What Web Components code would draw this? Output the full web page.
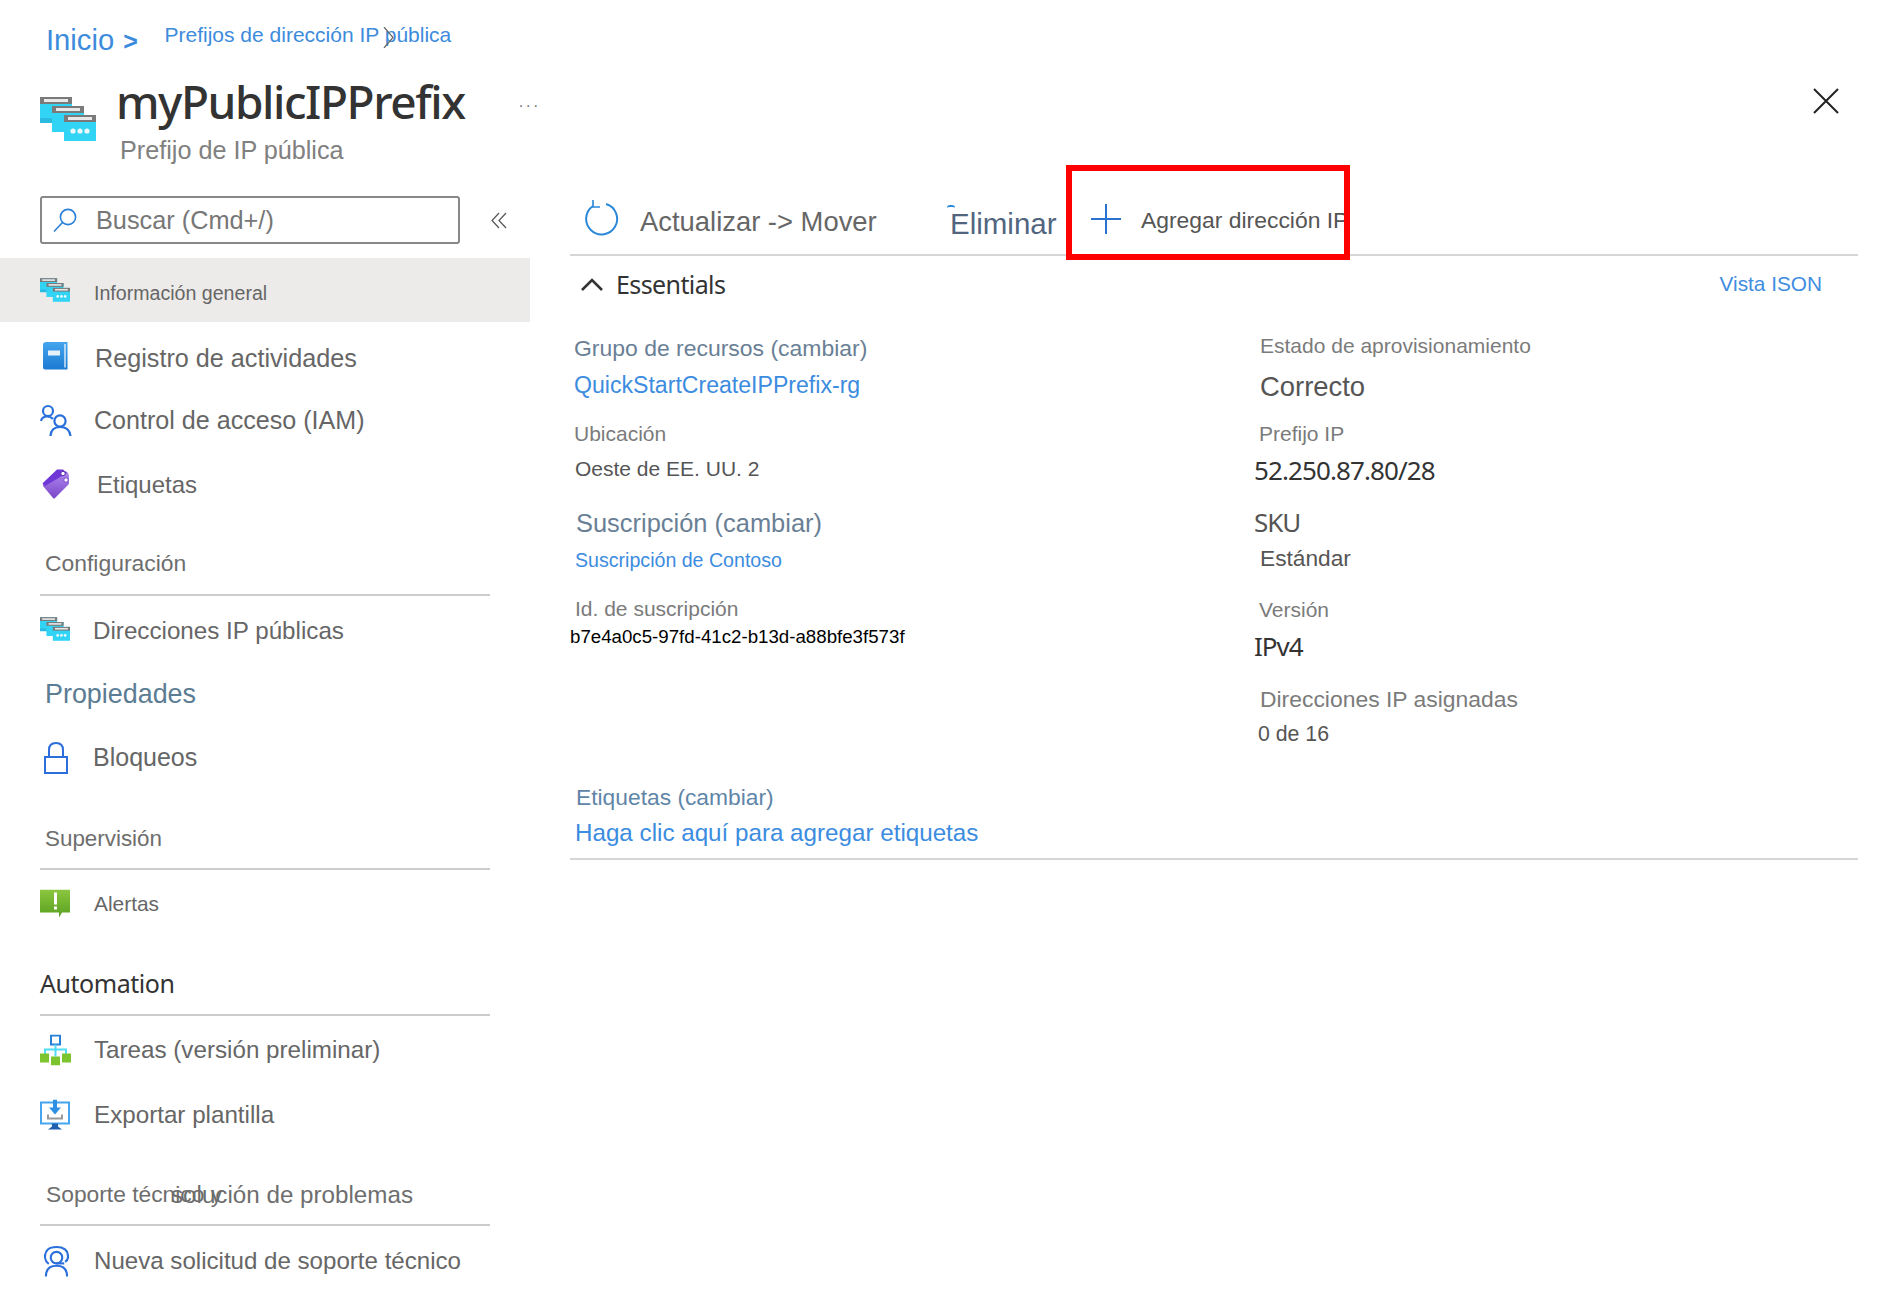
<!DOCTYPE html>
<html lang="es">
<head>
<meta charset="utf-8">
<title>myPublicIPPrefix</title>
<style>
  html, body { margin: 0; background: #fff; }
  body { width: 1894px; height: 1294px; overflow: hidden; font-family: "Liberation Sans", Arial, sans-serif; }
</style>
</head>
<body>
<blade-page>
  <blade-header slot="header"></blade-header>
  <side-nav slot="nav">
    <nav-search></nav-search>
    <nav-item icon="stack" selected style="--h:64px;--mt:14px;--fs:19.6px;--tx:94px;--tc:#666;--pt:6px">Información general</nav-item>
    <nav-item icon="book" style="--mt:10px;--ix:43px;--iy:-2px;--tx:95px;--fs:25.2px">Registro de actividades</nav-item>
    <nav-item icon="users" style="--mt:10px;--tx:94px;--fs:25.1px">Control de acceso (IAM)</nav-item>
    <nav-item icon="tag" style="--mt:13px;--ix:42px;--iy:-1px;--tx:97px;--fs:24px">Etiquetas</nav-item>
    <nav-head style="--mt:32px;--x:45px;--fs:22.9px;--rm:11px">Configuración</nav-head>
    <nav-item icon="stack" style="--mt:8.5px;--iy:-2px;--tx:93px;--fs:24.2px">Direcciones IP públicas</nav-item>
    <nav-head plain style="--mt:17px;--x:45px;--fs:26.9px;--c:#5b7c93">Propiedades</nav-head>
    <nav-item icon="lock" style="--mt:18px;--ix:44px;--tx:93px">Bloqueos</nav-item>
    <nav-head style="--mt:35px;--x:45px;--fs:22.4px;--rm:9px">Supervisión</nav-head>
    <nav-item icon="alert" style="--mt:8.5px;--tx:94px;--fs:20.9px">Alertas</nav-item>
    <nav-head segoe style="--mt:33px;--x:40px;--fs:25px;--c:#333;--rm:11px">Automation</nav-head>
    <nav-item icon="tasks" style="--mt:8px;--tx:94px;--fs:24.2px">Tareas (versión preliminar)</nav-item>
    <nav-item icon="export" style="--mt:13px;--tx:94px;--fs:24.2px">Exportar plantilla</nav-item>
    <nav-head overlay="solución de problemas" style="--mt:33px;--x:46px;--fs:22.8px">Soporte técnico y</nav-head>
    <nav-item icon="support" style="--mt:9px;--ix:44px;--tx:94px;--fs:24.1px">Nueva solicitud de soporte técnico</nav-item>
  </side-nav>
  <detail-panel slot="panel">
    <blade-toolbar></blade-toolbar>
    <essentials-bar></essentials-bar>
    <field-columns>
      <div slot="left">
        <info-line tone="change" style="--x:4px;--fs:22.96px;--mt:21px">Grupo de recursos (cambiar)</info-line>
        <info-line tone="link" style="--x:4px;--fs:23.1px;--mt:7px">QuickStartCreateIPPrefix-rg</info-line>
        <info-line tone="label" style="--x:4px;--fs:21px;--mt:19px">Ubicación</info-line>
        <info-line tone="value" style="--x:5px;--fs:21px;--mt:5px">Oeste de EE. UU. 2</info-line>
        <info-line tone="change" style="--x:6px;--fs:25.45px;--mt:24px">Suscripción (cambiar)</info-line>
        <info-line tone="link" style="--x:5px;--fs:19.6px;--mt:7px">Suscripción de Contoso</info-line>
        <info-line tone="label" style="--x:5px;--fs:21px;--mt:21px;--lh:26px">Id. de suscripción</info-line>
        <info-line tone="black" style="--x:0px;--fs:18.7px;--mt:2px;--lh:26px">b7e4a0c5-97fd-41c2-b13d-a88bfe3f573f</info-line>
      </div>
      <div slot="right">
        <info-line tone="label" style="--x:6px;--fs:21px;--mt:19px">Estado de aprovisionamiento</info-line>
        <info-line tone="value" style="--x:6px;--fs:27.4px;--mt:11px">Correcto</info-line>
        <info-line tone="label" style="--x:5px;--fs:21px;--mt:17px">Prefijo IP</info-line>
        <info-line tone="segoe" style="--x:0px;--fs:26px;--mt:6px;--ls:-0.9px">52.250.87.80/28</info-line>
        <info-line tone="segoe" style="--x:0px;--fs:26px;--mt:22px;--ls:-1px;--c:#555">SKU</info-line>
        <info-line tone="value" style="--x:6px;--fs:22.7px;--mt:6px">Estándar</info-line>
        <info-line tone="label" style="--x:5px;--fs:21px;--mt:22px">Versión</info-line>
        <info-line tone="segoe" style="--x:0px;--fs:26px;--mt:6px;--ls:-1px">IPv4</info-line>
        <info-line tone="label" style="--x:6px;--fs:22.9px;--mt:23px">Direcciones IP asignadas</info-line>
        <info-line tone="value" style="--x:4px;--fs:21.3px;--mt:5px">0 de 16</info-line>
      </div>
    </field-columns>
    <info-line tone="change2" style="--x:6px;--fs:22.8px;--mt:33px">Etiquetas (cambiar)</info-line>
    <info-line tone="link" style="--x:5px;--fs:24.2px;--mt:6px">Haga clic aquí para agregar etiquetas</info-line>
    <panel-rule></panel-rule>
  </detail-panel>
</blade-page>

<script>
// iconos en linea, el viewBox coincide con el tamaño en pixeles
const windowPart = (x, y, dots) => `
  <rect x="${x}" y="${y}" width="32" height="26" fill="#32d4f5"/>
  <rect x="${x}" y="${y}" width="32" height="7" fill="#7a7a7a"/>
  <rect x="${x + 4}" y="${y + 2}" width="24" height="3" fill="#e8e8e8"/>
  ${dots ? `<circle cx="${x + 9}" cy="${y + 16}" r="2.6" fill="#e8f8fd"/><circle cx="${x + 16}" cy="${y + 16}" r="2.6" fill="#e8f8fd"/><circle cx="${x + 23}" cy="${y + 16}" r="2.6" fill="#e8f8fd"/>` : ''}`;

const stackSvg = (w, h) => `<svg width="${w}" height="${h}" viewBox="0 0 56 44">
  ${windowPart(0, 0)}<rect x="0" y="21" width="32" height="5" fill="#2bbbe0"/>
  ${windowPart(12, 9)}
  ${windowPart(24, 18, true)}
</svg>`;

const ICONS = {
  stack: stackSvg(30, 24),
  book: `<svg width="25" height="29" viewBox="0 0 25 29">
    <defs><linearGradient id="b" x1="0" y1="0" x2="0" y2="1"><stop offset="0" stop-color="#45a5ee"/><stop offset="1" stop-color="#1b7ad2"/></linearGradient></defs>
    <path d="M3 0.5H24.5V28H2Q0 28 0 26V3Q0 1 3 0.5Z" fill="url(#b)"/>
    <path d="M22 2.5V26" stroke="#fff" stroke-width="1.2"/>
    <rect x="5" y="9" width="12" height="5" fill="#e6f2fb"/>
  </svg>`,
  users: `<svg width="32" height="32" viewBox="0 0 32 32" fill="none" stroke="#2a6fdb" stroke-width="2.2">
    <circle cx="8" cy="7" r="5"/>
    <path d="M1 17Q2 12.5 7 12.5Q11 12.5 13 15"/>
    <circle cx="20" cy="17" r="5.6"/>
    <path d="M10.5 32Q11 23 20 23Q29.5 23 30.5 32"/>
  </svg>`,
  tag: `<svg width="28" height="30" viewBox="0 0 28 30">
    <defs><linearGradient id="t" x1="0" y1="0" x2="0" y2="1"><stop offset="0" stop-color="#b08af0"/><stop offset="1" stop-color="#7b45c8"/></linearGradient></defs>
    <path d="M1 14L14 2H23Q27 3 27 8V15L13 29Q12 30 11 29L1 17Z" fill="url(#t)"/>
    <path d="M0.5 14.5L15 0.5H21L25 4L3 17Z" fill="#6f37d6"/>
    <circle cx="21" cy="4.5" r="2.2" fill="#fff" stroke="#5a2fb0"/>
    <circle cx="24" cy="11" r="2.2" fill="#fff" stroke="#7b45c8"/>
  </svg>`,
  lock: `<svg width="24" height="32" viewBox="0 0 24 32" fill="none" stroke="#2a6fdb" stroke-width="2">
    <rect x="1" y="15" width="22" height="16"/>
    <path d="M5 15V8Q5 1 12 1Q19 1 19 8V15"/>
  </svg>`,
  alert: `<svg width="31" height="29" viewBox="0 0 31 29">
    <defs><linearGradient id="a" x1="0" y1="0" x2="0" y2="1"><stop offset="0" stop-color="#8cc63f"/><stop offset="1" stop-color="#58a01f"/></linearGradient></defs>
    <path d="M0 0H30V23H22L19 28V23H0Z" fill="url(#a)"/>
    <rect x="14" y="3" width="3" height="12" fill="#fff"/>
    <rect x="14" y="17" width="3" height="3" fill="#fff"/>
  </svg>`,
  tasks: `<svg width="31" height="31" viewBox="0 0 31 31">
    <rect x="11" y="1" width="9" height="9" fill="#fff" stroke="#2a7fd6" stroke-width="2"/>
    <path d="M15.5 10V22M5 20V15H26V20" fill="none" stroke="#4fdcf5" stroke-width="2"/>
    <rect x="0" y="19" width="9" height="9" fill="#7cc52f"/>
    <rect x="11" y="22" width="9" height="9" fill="#7cc52f"/>
    <rect x="22" y="19" width="9" height="9" fill="#7cc52f"/>
  </svg>`,
  export: `<svg width="30" height="31" viewBox="0 0 30 31">
    <rect x="1" y="3" width="28" height="21" fill="#fff" stroke="#45a5ee" stroke-width="2"/>
    <path d="M8 15V19H22V15" fill="none" stroke="#999" stroke-width="2"/>
    <path d="M13 0H17V8H21L15 15L9 8H13Z" fill="#2f8fe3"/>
    <path d="M12 24H18V27L22 30H8L12 27Z" fill="#1f5fb0"/>
  </svg>`,
  support: `<svg width="25" height="32" viewBox="0 0 26 32" fill="none" stroke="#2a6fdb" stroke-width="2.2">
    <path d="M5 19Q1 16 1 11.5Q1 1.5 13 1.5Q25 1.5 25 11.5Q25 15 22 17"/>
    <circle cx="13" cy="12.5" r="6"/>
    <path d="M2 32Q2 21 13 21Q24 21 24 32"/>
    <path d="M13 18.5H21"/>
  </svg>`,
  search: `<svg width="24" height="25" viewBox="0 0 24 25" fill="none" stroke="#2a7fd6" stroke-width="1.6">
    <circle cx="15" cy="9" r="7.6"/>
    <path d="M9.5 14.5L1 23.5"/>
  </svg>`,
  refresh: `<svg width="34" height="37" viewBox="0 0 34 37" fill="none" stroke="#2b88d8" stroke-width="2">
    <path d="M8 7A15.5 15.5 0 1 0 21 5"/>
    <path d="M8 1V8H15" stroke-width="1.6"/>
  </svg>`,
  plus: `<svg width="30" height="30" viewBox="0 0 30 30" stroke="#2b72d0" stroke-width="2"><path d="M15 0V30M0 15H30"/></svg>`,
  collapse: `<svg width="16" height="17" viewBox="0 0 16 17" fill="none" stroke="#555" stroke-width="1.2"><path d="M8 1L1 8.5L8 16M15 1L8 8.5L15 16"/></svg>`,
  close: `<svg width="26" height="26" viewBox="0 0 26 26" stroke="#222" stroke-width="2"><path d="M1 1L25 25M25 1L1 25"/></svg>`,
  caretUp: `<svg width="22" height="13" viewBox="0 0 22 13" fill="none" stroke="#333" stroke-width="2.6"><path d="M1 12L11 2L21 12"/></svg>`
};

const SEGOE = `"Noto Sans", "Open Sans", sans-serif`;

class BladePage extends HTMLElement {
  connectedCallback() {
    this.attachShadow({ mode: 'open' }).innerHTML = `
      <style>
        :host { display: block; width: 1894px; height: 1294px; }
        .body { display: grid; grid-template-columns: 530px 1288px; column-gap: 40px; }
      </style>
      <slot name="header"></slot>
      <div class="body"><slot name="nav"></slot><slot name="panel"></slot></div>`;
  }
}

class BladeHeader extends HTMLElement {
  connectedCallback() {
    this.attachShadow({ mode: 'open' }).innerHTML = `
      <style>
        :host { display: block; height: 196px; color: #333; }
        .crumbs { height: 73px; display: flex; align-items: flex-start; position: relative; color: #3d8bdc; }
        .home { font-size: 29.2px; line-height: 36px; margin: 22px 0 0 46px; width: 118.5px; white-space: nowrap; }
        .home b { font-size: 25px; margin-left: 9px; }
        .path { font-size: 21px; line-height: 28px; margin-top: 21px; }
        .sep { position: absolute; left: 383px; top: 27px; }
        .title-row { display: flex; align-items: flex-start; padding-left: 40px; }
        .mark { margin: 24px 20px 0 0; }
        h1 { margin: 0; font: 500 46px/56px ${SEGOE}; color: #333; letter-spacing: -1.45px; }
        .sub { font-size: 25.2px; line-height: 30px; margin: 6px 0 0 4px; color: #808080; }
        .dots { margin: 20px 0 0 54px; font-size: 16px; color: #777; letter-spacing: 3px; }
        .close { margin: 15px 0 0 auto; padding-right: 55px; }
      </style>
      <div class="crumbs">
        <div class="home">Inicio<b>&gt;</b></div>
        <div class="path">Prefijos de dirección IP pública</div>
        <svg class="sep" width="11" height="21" viewBox="0 0 11 21" fill="none" stroke="#666" stroke-width="1.2"><path d="M1 0L10 10.5L1 21"/></svg>
      </div>
      <div class="title-row">
        <div class="mark">${stackSvg(56, 44)}</div>
        <div>
          <h1>myPublicIPPrefix</h1>
          <div class="sub">Prefijo de IP pública</div>
        </div>
        <div class="dots">...</div>
        <div class="close">${ICONS.close}</div>
      </div>`;
  }
}

class SideNav extends HTMLElement {
  connectedCallback() {
    this.attachShadow({ mode: 'open' }).innerHTML = `
      <style>:host { display: flex; flex-direction: column; width: 530px; }</style>
      <slot></slot>`;
  }
}

class NavSearch extends HTMLElement {
  connectedCallback() {
    this.attachShadow({ mode: 'open' }).innerHTML = `
      <style>
        :host { display: flex; align-items: center; height: 48px; padding-left: 40px; }
        .box { width: 420px; height: 48px; box-sizing: border-box; border: 2px solid #888; border-radius: 3px; display: flex; align-items: center; }
        .box svg { margin: 0 19px 0 11px; display: block; }
        .text { font-size: 25.3px; color: #777; }
        .fold { margin-left: 31px; display: flex; }
      </style>
      <div class="box">${ICONS.search}<span class="text">Buscar (Cmd+/)</span></div>
      <div class="fold">${ICONS.collapse}</div>`;
  }
}

class NavItem extends HTMLElement {
  connectedCallback() {
    const icon = ICONS[this.getAttribute('icon')];
    this.attachShadow({ mode: 'open' }).innerHTML = `
      <style>
        :host { display: flex; align-items: center; height: var(--h, 52px); margin-top: var(--mt, 0); position: relative; color: var(--tc, #666); font-size: var(--fs, 25px); }
        :host([selected]) { background: #edebe9; }
        .icon { position: absolute; left: var(--ix, 40px); top: calc(50% + var(--iy, 0px)); transform: translateY(-50%); display: flex; }
        .label { margin-left: var(--tx, 94px); padding-top: var(--pt, 0); white-space: nowrap; }
      </style>
      <span class="icon">${icon}</span>
      <span class="label"><slot></slot></span>`;
  }
}

class NavHead extends HTMLElement {
  connectedCallback() {
    const overlay = this.getAttribute('overlay');
    const plain = this.hasAttribute('plain');
    this.attachShadow({ mode: 'open' }).innerHTML = `
      <style>
        :host { display: block; margin-top: var(--mt, 0); position: relative; }
        .text { height: 40px; line-height: 40px; padding-left: var(--x, 45px); font-size: var(--fs, 22.5px); color: var(--c, #6e6e6e); white-space: nowrap; }
        :host([segoe]) .text { font-family: ${SEGOE}; font-size: var(--fs); letter-spacing: -0.45px; }
        .over { position: absolute; left: 171px; top: 1px; font-size: 24.2px; line-height: 40px; color: #6e6e6e; white-space: nowrap; }
        .rule { height: 2px; margin: var(--rm, 10px) 0 0 40px; width: 450px; background: #ccc; }
      </style>
      <div class="text"><slot></slot></div>
      ${overlay ? `<span class="over">${overlay}</span>` : ''}
      ${plain ? '' : '<div class="rule"></div>'}`;
  }
}

class BladeToolbar extends HTMLElement {
  connectedCallback() {
    this.attachShadow({ mode: 'open' }).innerHTML = `
      <style>
        :host { display: flex; align-items: center; height: 58px; padding-bottom: 0; border-bottom: 2px solid #d6d6d6; position: relative; color: #666; box-sizing: content-box; }
        .row { display: flex; align-items: center; height: 51px; width: 100%; margin-bottom: 7px; }
        .refresh { margin-left: 15px; display: flex; position: relative; top: -4px; }
        .move { margin-left: 21px; font-size: 27.4px; width: 310px; white-space: nowrap; }
        .del { font-size: 29.5px; color: #51657f; position: relative; top: 2px; width: 141px; }
        .del i { position: absolute; left: -3px; top: -2px; width: 8px; height: 3px; border-top: 2px solid #2b88d8; border-radius: 4px 4px 0 0; box-sizing: border-box; }
        .plus { display: flex; position: relative; top: -3px; }
        .add { margin-left: 20px; font-size: 22.9px; color: #555; white-space: nowrap; position: relative; top: -1px; }
        .mark { position: absolute; left: 496px; top: -31px; width: 284px; height: 95px; box-sizing: border-box; border: 6px solid #f00; }
      </style>
      <div class="row">
        <span class="refresh">${ICONS.refresh}</span>
        <span class="move">Actualizar -&gt; Mover</span>
        <span class="del"><i></i>Eliminar</span>
        <span class="plus">${ICONS.plus}</span>
        <span class="add">Agregar dirección IP</span>
      </div>
      <div class="mark"></div>`;
  }
}

class EssentialsBar extends HTMLElement {
  connectedCallback() {
    this.attachShadow({ mode: 'open' }).innerHTML = `
      <style>
        :host { display: flex; align-items: center; height: 56px; padding: 0 36px 0 11px; box-sizing: border-box; }
        svg { display: block; margin-right: 13px; }
        .name { font: 25px ${SEGOE}; color: #333; letter-spacing: -0.6px; }
        .json { margin-left: auto; font-size: 20.8px; color: #3f8de0; }
      </style>
      ${ICONS.caretUp}
      <span class="name">Essentials</span>
      <span class="json">Vista ISON</span>`;
  }
}

class FieldColumns extends HTMLElement {
  connectedCallback() {
    this.attachShadow({ mode: 'open' }).innerHTML = `
      <style>:host { display: grid; grid-template-columns: 684px 1fr; }</style>
      <slot name="left"></slot><slot name="right"></slot>`;
  }
}

class InfoLine extends HTMLElement {
  connectedCallback() {
    this.attachShadow({ mode: 'open' }).innerHTML = `
      <style>
        :host { display: block; margin-top: var(--mt, 0); padding-left: var(--x, 0); font-size: var(--fs, 21px); line-height: var(--lh, 30px); height: var(--lh, 30px); white-space: nowrap; }
        :host([tone="label"]) { color: #7b7b7b; }
        :host([tone="value"]) { color: #555; }
        :host([tone="black"]) { color: #000; }
        :host([tone="link"]) { color: #3c8ce0; }
        :host([tone="change"]) { color: #6a7f95; }
        :host([tone="change2"]) { color: #5f86a8; }
        :host([tone="segoe"]) { color: var(--c, #333); font-family: ${SEGOE}; letter-spacing: var(--ls, 0); }
      </style>
      <slot></slot>`;
  }
}

class PanelRule extends HTMLElement {
  connectedCallback() {
    this.attachShadow({ mode: 'open' }).innerHTML = `
      <style>:host { display: block; height: 2px; margin-top: 10px; background: #d6d6d6; }</style>`;
  }
}

class DetailPanel extends HTMLElement {
  connectedCallback() {
    this.attachShadow({ mode: 'open' }).innerHTML = `
      <style>:host { display: block; width: 1288px; }</style>
      <slot></slot>`;
  }
}

customElements.define('blade-page', BladePage);
customElements.define('blade-header', BladeHeader);
customElements.define('side-nav', SideNav);
customElements.define('nav-search', NavSearch);
customElements.define('nav-item', NavItem);
customElements.define('nav-head', NavHead);
customElements.define('blade-toolbar', BladeToolbar);
customElements.define('essentials-bar', EssentialsBar);
customElements.define('field-columns', FieldColumns);
customElements.define('info-line', InfoLine);
customElements.define('panel-rule', PanelRule);
customElements.define('detail-panel', DetailPanel);
</script>
</body>
</html>
